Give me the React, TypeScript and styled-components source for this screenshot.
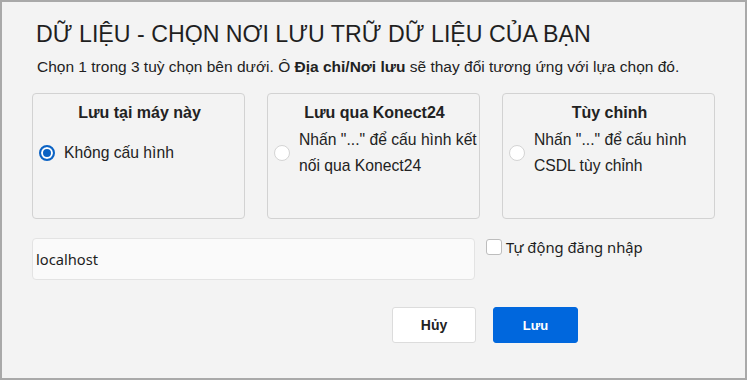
import React, { useState } from "react";
import styled, { createGlobalStyle } from "styled-components";

const GlobalStyle = createGlobalStyle`
  html, body {
    margin: 0;
    padding: 0;
    background: #f3f3f3;
  }
  * {
    box-sizing: border-box;
  }
`;

const Window = styled.div`
  width: 747px;
  height: 380px;
  border: 2px solid #a9a9a9;
  background: #f3f3f3;
  padding: 18px 0 0 30px;
  font-family: "Liberation Sans", Arial, sans-serif;
  color: #222;
`;

const Title = styled.h1`
  margin: 0 0 0 4px;
  font-size: 23.2px;
  line-height: 28px;
  font-weight: normal;
  color: #1f1f1f;
`;

const Subtitle = styled.p`
  margin: 9px 0 0 5px;
  font-size: 15.5px;
  line-height: 20px;
  b {
    font-weight: bold;
  }
`;

const Cards = styled.div`
  display: grid;
  grid-template-columns: repeat(3, 213px);
  column-gap: 22px;
  margin-top: 16px;
`;

const Card = styled.div`
  height: 126px;
  border: 1px solid #d2d2d2;
  border-radius: 4px;
  padding: 9px 0 0 6px;
`;

const CardTitle = styled.div`
  text-align: center;
  font-size: 16px;
  line-height: 20px;
  font-weight: bold;
  padding-right: 4px;
`;

const CardBody = styled.label`
  display: flex;
  align-items: center;
  gap: 9px;
  min-height: 52px;
  margin-top: 4px;
  font-size: 15.7px;
  line-height: 26px;
  white-space: nowrap;
  cursor: pointer;
`;

const Radio = styled.span<{ checked: boolean }>`
  flex: none;
  width: 16px;
  height: 16px;
  border-radius: 50%;
  background: #fff;
  border: ${({ checked }) =>
    checked ? "2px solid #0a62c4" : "1px solid #d4d4d4"};
  box-shadow: ${({ checked }) =>
    checked ? "inset 0 0 0 2px #fff, inset 0 0 0 6px #0a62c4" : "none"};
`;

const InputRow = styled.div`
  display: flex;
  align-items: flex-start;
  margin-top: 19px;
`;

const HostInput = styled.div`
  width: 443px;
  height: 42px;
  border: 1px solid #e3e3e3;
  border-radius: 4px;
  background: #fafafa;
  padding: 0 0 0 3px;
  display: flex;
  align-items: center;
  font-family: "Noto Sans", "Open Sans", sans-serif;
  font-size: 14.7px;
  color: #1e1e1e;
`;

const CheckLabel = styled.label`
  display: flex;
  align-items: center;
  gap: 4px;
  margin-left: 11px;
  margin-top: 1px;
  font-family: "Noto Sans", "Open Sans", sans-serif;
  font-size: 14.8px;
  line-height: 16px;
  color: #1e1e1e;
  cursor: pointer;
`;

const CheckBox = styled.span`
  width: 16px;
  height: 16px;
  border: 1px solid #bdbdbd;
  border-radius: 3px;
  background: #fff;
`;

const Actions = styled.div`
  display: flex;
  gap: 17px;
  margin: 27px 0 0 360px;
`;

const Button = styled.button<{ primary?: boolean }>`
  width: ${({ primary }) => (primary ? "85px" : "84px")};
  height: 36px;
  border-radius: 3px;
  border: 1px solid ${({ primary }) => (primary ? "#0067dd" : "#dcdcdc")};
  background: ${({ primary }) => (primary ? "#0067dd" : "#fff")};
  color: ${({ primary }) => (primary ? "#fff" : "#222")};
  font-family: "Liberation Sans", Arial, sans-serif;
  font-size: ${({ primary }) => (primary ? "13px" : "14px")};
  font-weight: bold;
  cursor: pointer;
`;

const options = [
  { title: "Lưu tại máy này", lines: ["Không cấu hình"] },
  { title: "Lưu qua Konect24", lines: ['Nhấn "..." để cấu hình kết', "nối qua Konect24"] },
  { title: "Tùy chỉnh", lines: ['Nhấn "..." để cấu hình', "CSDL tùy chỉnh"] },
];

export default function App() {
  const [selected, setSelected] = useState(0);

  return (
    <>
      <GlobalStyle />
      <Window>
        <Title>DỮ LIỆU - CHỌN NƠI LƯU TRỮ DỮ LIỆU CỦA BẠN</Title>
        <Subtitle>
          Chọn 1 trong 3 tuỳ chọn bên dưới. Ô <b>Địa chỉ/Nơi lưu</b> sẽ thay đổi
          tương ứng với lựa chọn đó.
        </Subtitle>
        <Cards>
          {options.map((o, i) => (
            <Card key={o.title}>
              <CardTitle>{o.title}</CardTitle>
              <CardBody onClick={() => setSelected(i)}>
                <Radio checked={selected === i} />
                <span>
                  {o.lines.map((l, j) => (
                    <React.Fragment key={j}>
                      {j > 0 && <br />}
                      {l}
                    </React.Fragment>
                  ))}
                </span>
              </CardBody>
            </Card>
          ))}
        </Cards>
        <InputRow>
          <HostInput>localhost</HostInput>
          <CheckLabel>
            <CheckBox />
            Tự động đăng nhập
          </CheckLabel>
        </InputRow>
        <Actions>
          <Button>Hủy</Button>
          <Button primary>Lưu</Button>
        </Actions>
      </Window>
    </>
  );
}
